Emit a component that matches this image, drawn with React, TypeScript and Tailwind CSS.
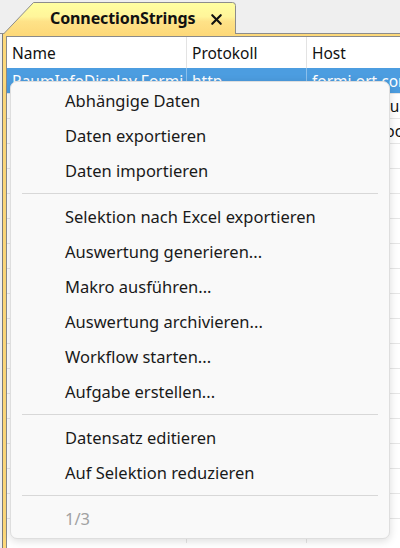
import { X } from 'lucide-react'

const columns = [
  { label: 'Name', width: 'w-[180px]' },
  { label: 'Protokoll', width: 'w-[120px]' },
  { label: 'Host', width: 'flex-1' },
]

const rows = [
  ['RaumInfoDisplay Formi', 'http', 'formi.ort.com'],
  ['RaumInfoBackend', 'https', 'formi.backup.de'],
  ['RaumInfoService', 'https', 'formi.ort.local'],
  ...Array.from({ length: 16 }, () => ['', '', '']),
]

type MenuEntry = { label: string; disabled?: boolean } | 'sep'

const menu: MenuEntry[] = [
  { label: 'Abhängige Daten' },
  { label: 'Daten exportieren' },
  { label: 'Daten importieren' },
  'sep',
  { label: 'Selektion nach Excel exportieren' },
  { label: 'Auswertung generieren...' },
  { label: 'Makro ausführen...' },
  { label: 'Auswertung archivieren...' },
  { label: 'Workflow starten...' },
  { label: 'Aufgabe erstellen...' },
  'sep',
  { label: 'Datensatz editieren' },
  { label: 'Auf Selektion reduzieren' },
  'sep',
  { label: '1/3', disabled: true },
]

function TabShape() {
  return (
    <svg className="absolute inset-0" width="233" height="32" viewBox="0 0 233 32">
      <defs>
        <linearGradient id="tabFill" x1="0" y1="0" x2="0" y2="1">
          <stop offset="0" stopColor="#ffffa0" />
          <stop offset="0.45" stopColor="#fff59a" />
          <stop offset="0.6" stopColor="#fee288" />
          <stop offset="1" stopColor="#fdd97a" />
        </linearGradient>
      </defs>
      <path d="M0.5 32 L30.5 0.5 L229.5 0.5 Q232.5 0.5 232.5 3.5 L232.5 32 Z" fill="url(#tabFill)" />
      <path d="M0.5 32 L30.5 0.5 L229.5 0.5 Q232.5 0.5 232.5 3.5 L232.5 32" fill="none" stroke="#8c8c8c" />
    </svg>
  )
}

export default function App() {
  return (
    <div
      className="relative flex h-[548px] w-[400px] flex-col overflow-hidden bg-[#efefef]"
      style={{ fontFamily: '"Noto Sans", "Open Sans", sans-serif' }}
    >
      {/* Tab strip */}
      <div className="flex h-[34px] shrink-0 items-end border-b border-[#8c8c8c] pl-[3px]">
        <div className="relative z-10 mb-[-1px] flex h-[32px] w-[233px] items-center">
          <TabShape />
          <span className="relative ml-[47px] text-[16px] font-bold tracking-[-0.1px] text-[#111]">
            ConnectionStrings
          </span>
          <X className="relative ml-[12px] mt-[2px] h-[17px] w-[17px] text-[#111]" strokeWidth={3} />
        </div>
      </div>

      {/* Document frame */}
      <div className="ml-[2px] flex min-h-0 flex-1 flex-col border-l border-[#7a7a7a] bg-[#fdd97a] pl-[3px] pt-[2px]">
        <div className="flex min-h-0 flex-1 flex-col border-l border-t border-[#8a8a8a] bg-white">
          {/* Header */}
          <div className="flex h-[31px] shrink-0 text-[15.5px] text-[#111]">
            {columns.map((c, i) => (
              <div
                key={c.label}
                className={`${c.width} flex items-center pl-[5px] pt-[3px] ${i < 2 ? 'border-r border-[#e3e3e3]' : ''}`}
              >
                {c.label}
              </div>
            ))}
          </div>

          {/* Rows */}
          {rows.map((r, ri) => (
            <div
              key={ri}
              className={`flex h-[25px] shrink-0 text-[15.5px] ${
                ri === 0 ? 'bg-[#4c9de0] text-white' : 'border-t border-[#e6e6e6] text-[#111]'
              }`}
            >
              {r.map((cell, ci) => (
                <div
                  key={ci}
                  className={`${columns[ci].width} flex items-center overflow-hidden whitespace-nowrap pl-[5px] pt-[2px] ${
                    ci < 2 ? (ri === 0 ? 'border-r border-[#8cc0ec]' : 'border-r border-[#e6e6e6]') : ''
                  }`}
                >
                  {cell}
                </div>
              ))}
            </div>
          ))}
        </div>
      </div>

      {/* Context menu */}
      <div className="absolute left-[10px] top-[81px] z-20 w-[380px] rounded-[7px] border border-[#dedede] bg-[#f9f9f9] pb-[1px] pt-[2px] shadow-[0_2px_8px_rgba(0,0,0,0.14)]">
        {menu.map((m, i) =>
          m === 'sep' ? (
            <div key={i} className="pb-[6px] pt-[4px]">
              <div className="mx-[11px] h-px bg-[#d8d8d8]" />
            </div>
          ) : (
            <div
              key={i}
              className={`flex h-[35px] items-center pl-[54px] text-[16.5px] ${
                m.disabled ? 'text-[#a2a2a2]' : 'text-[#1a1a1a]'
              }`}
            >
              {m.label}
            </div>
          ),
        )}
      </div>
    </div>
  )
}
